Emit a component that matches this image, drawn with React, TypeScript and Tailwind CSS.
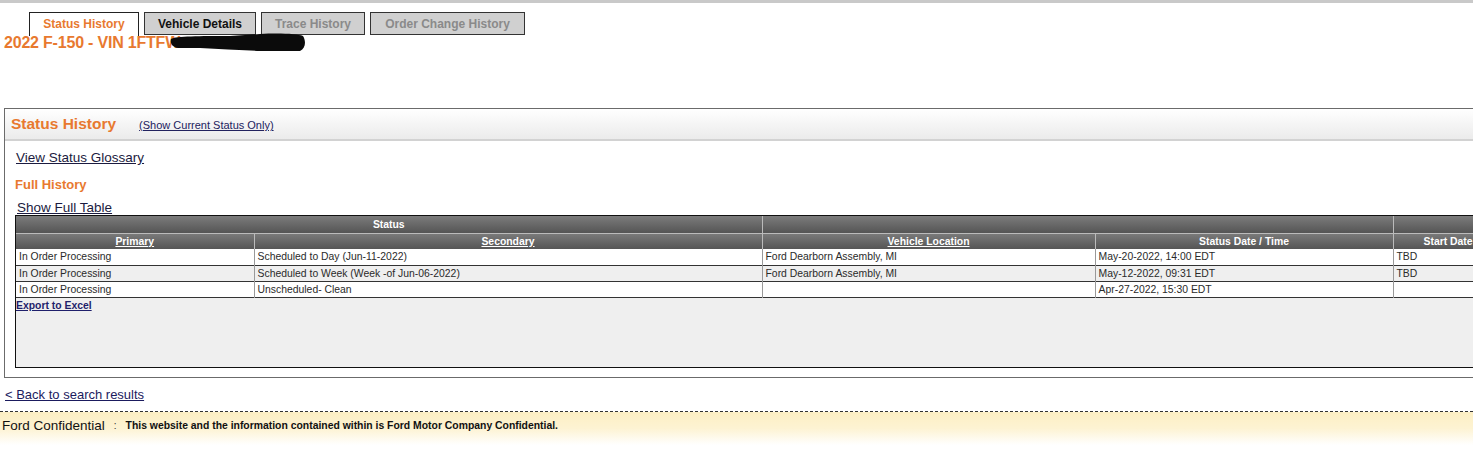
import React from "react";

const rows = [
  ["In Order Processing", "Scheduled to Day (Jun-11-2022)", "Ford Dearborn Assembly, MI", "May-20-2022, 14:00 EDT", "TBD"],
  ["In Order Processing", "Scheduled to Week (Week -of Jun-06-2022)", "Ford Dearborn Assembly, MI", "May-12-2022, 09:31 EDT", "TBD"],
  ["In Order Processing", "Unscheduled- Clean", "", "Apr-27-2022, 15:30 EDT", ""],
];

const Tab = ({ label, active, muted }: { label: string; active?: boolean; muted?: boolean }) => (
  <div
    className={
      active
        ? "h-[24px] w-[110px] justify-center flex items-center pb-[1px] bg-white border border-b-0 border-[#222] text-[12px] font-bold text-[#e8792f]"
        : muted
        ? "h-[23px] justify-center flex items-center bg-[#d0d0d0] border border-[#333] text-[12px] font-bold text-[#8a8a8a]"
        : "h-[23px] justify-center flex items-center bg-[#d0d0d0] border border-[#333] text-[12px] font-bold text-[#111]"
    }
  >
    {label}
  </div>
);

export default function App() {
  return (
    <div className="w-[1473px] h-[454px] overflow-hidden bg-white font-['Liberation_Sans',Arial,sans-serif]">
      <div className="h-[3px] bg-[#c9c9c9]" />
      <div className="flex gap-[5px] ml-[29px] mt-[9px] items-start">
        <Tab label="Status History" active />
        <div className="w-[112px]"><Tab label="Vehicle Details" /></div>
        <div className="w-[104px]"><Tab label="Trace History" muted /></div>
        <div className="w-[155px]"><Tab label="Order Change History" muted /></div>
      </div>
      <div className="relative ml-[4px] -mt-[1px] h-[16px] leading-[16px] text-[16px] font-bold tracking-[-0.2px] text-[#e8792f] w-fit">
        2022 F-150 - VIN 1FTFW
        <svg className="absolute left-[166px] -top-[2px]" width="136" height="19" viewBox="0 0 136 19">
          <path d="M1 6 C6 3 30 3 60 3 L90 1 C112 0 127 1 133 3 C136 8 136 15 130 18 L90 18 C70 17 50 16 30 15 L8 15 C2 14 0 10 1 6 Z" fill="#0b0b0b" />
        </svg>
      </div>

      <div className="ml-[4px] mt-[57px] w-[1520px] h-[270px] border border-[#6b6b6b] flex flex-col">
        <div className="h-[32px] shrink-0 bg-gradient-to-b from-white to-[#ebebeb] border-b-2 border-[#d2d2d2] flex items-center pl-[6px]">
          <span className="text-[15.5px] font-bold text-[#e8792f]">Status History</span>
          <span className="ml-[23px] mt-[3px] text-[11px] text-[#22225e] underline">(Show Current Status Only)</span>
        </div>
        <div className="pl-[11px] pt-[9px] text-[13.5px] leading-[16px] text-[#1b1b40] underline">View Status Glossary</div>
        <div className="pl-[10px] pt-[11px] text-[13px] leading-[16px] font-bold text-[#e8792f]">Full History</div>
        <div className="pl-[12px] pt-[7px] text-[13.5px] leading-[16px] text-[#1b1b40] underline">Show Full Table</div>
        <div className="ml-[10px] mt-[-1px] h-[153px] bg-[#efefef] border border-[#111] overflow-hidden">
          <table className="border-collapse text-[10.4px] leading-[15px] table-fixed w-[1560px]">
            <colgroup>
              <col className="w-[238px]" />
              <col className="w-[508px]" />
              <col className="w-[333px]" />
              <col className="w-[298px]" />
              <col className="w-[183px]" />
            </colgroup>
            <thead>
              <tr className="h-[17px] bg-gradient-to-b from-[#7c7c7c] to-[#555] text-white font-bold">
                <th colSpan={2} className="border-r border-[#bbb] font-bold">Status</th>
                <th colSpan={2} className="border-r border-[#bbb]" />
                <th />
              </tr>
              <tr className="h-[16px] bg-gradient-to-b from-[#7c7c7c] to-[#555] text-white font-bold">
                <th className="border-r border-t border-[#bbb] underline">Primary</th>
                <th className="border-r border-t border-[#bbb] underline">Secondary</th>
                <th className="border-r border-t border-[#bbb] underline">Vehicle Location</th>
                <th className="border-r border-t border-[#bbb]">Status Date / Time</th>
                <th className="border-t border-[#bbb] text-left pl-[30px] whitespace-nowrap">Start Date</th>
              </tr>
            </thead>
            <tbody>
              {rows.map((r, i) => (
                <tr key={i} className={(i === 1 ? "bg-[#efefef]" : "bg-white") + " h-[16px] border-b border-[#333] text-[#2a2a2a]"}>
                  {r.map((c, j) => (
                    <td key={j} className="border-r border-[#999] pl-[3px] whitespace-nowrap">
                      {c}
                    </td>
                  ))}
                </tr>
              ))}
            </tbody>
          </table>
          <div className="pl-[0px] pt-[1px] text-[10.4px] leading-[14px] font-bold text-[#1f1f6b] underline">Export to Excel</div>
        </div>
      </div>

      <div className="pl-[5px] pt-[9px] text-[13px] leading-[16px] text-[#1b1b5e] underline">&lt; Back to search results</div>
      <div className="mt-[8px] border-t border-dashed border-[#333] h-[34px] bg-gradient-to-b from-[#fdefc3] via-[#fdf3d3] to-white flex items-start pt-[4px] pl-[2px]">
        <span className="text-[13.5px] text-[#111]">Ford Confidential</span>
        <span className="ml-[9px] text-[10px] text-[#333] mt-[2px]">:</span>
        <span className="ml-[9px] text-[10.4px] font-bold text-[#111] mt-[2px]">This website and the information contained within is Ford Motor Company Confidential.</span>
      </div>
    </div>
  );
}
